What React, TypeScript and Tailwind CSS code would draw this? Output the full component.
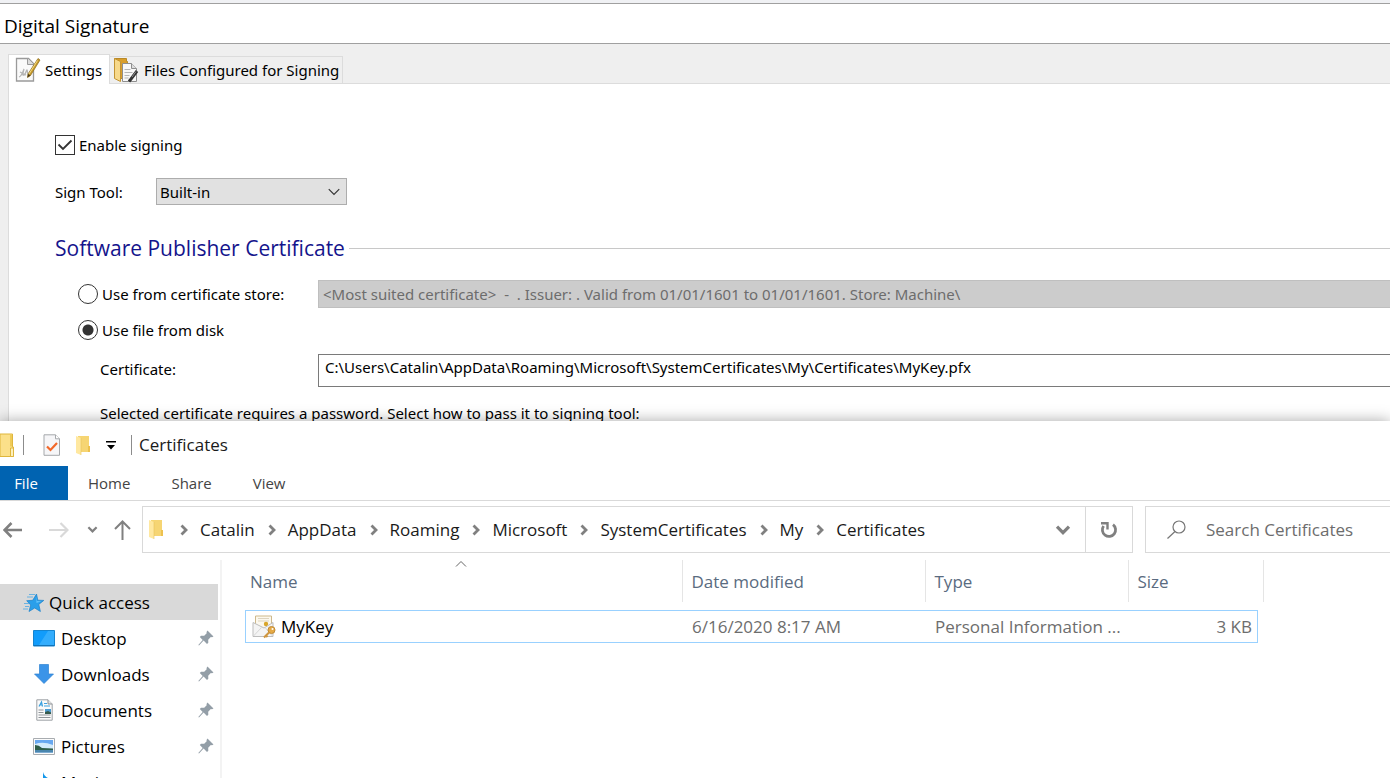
import React, { useState } from 'react';

const tahoma = "font-['Noto_Sans','Open_Sans',sans-serif]";
const segoe = "font-['Open_Sans','Noto_Sans',sans-serif]";

const SettingsIcon = () => (
  <svg width="26" height="26" viewBox="0 0 26 26" fill="none" aria-hidden="true">
    <path d="M1.500 1.500h12l5 5v17.500h-17z" fill="#fafafa" stroke="#9a9a9a" strokeWidth="1.300" />
    <path d="M12.500 1.500v6h6" fill="#dcdcdc" stroke="#9a9a9a" />
    <path d="M4 20c3-1 4-6 5-8-1 4-2 7 0 6s2-5 3-5-1 6 4 4M5 15l6 3" stroke="#b5b5b5" strokeWidth="1.300" />
    <path d="M23 1.500l2 1.500-9.500 15.500-3 2 .5-3.500z" fill="#c89b2c" stroke="#8a6a1d" strokeWidth=".7" />
    <path d="M22.500 3.500l-8.500 13.500" stroke="#f4dc83" />
    <path d="M13 17l-.5 3.500 3-2z" fill="#4b3a1b" />
  </svg>
);

const FilesIcon = () => (
  <svg width="26" height="26" viewBox="0 0 26 26" fill="none" aria-hidden="true">
    <path d="M1.500 1.500h12v3h1v17h-7l-6-1z" fill="#d99e2b" stroke="#b98928" />
    <path d="M1.500 1.500l6 3v20l-6-3z" fill="#f7d98b" stroke="#c39433" />
    <path d="M9.500 6.500h9l5 5v13h-14z" fill="#f8f8f8" stroke="#8e8e8e" />
    <path d="M18.500 6.500v5h5" fill="#ddd" stroke="#8e8e8e" />
    <path d="M11.500 12.500h6M11.500 15.500h8M11.500 18.500h5M11.500 21h4" stroke="#b5b5b5" />
    <path d="M24 14l-6 8-2 2.500" stroke="#333" strokeWidth="3" />
    <path d="M23 14.500l-4 5.500" stroke="#8b8b8b" />
  </svg>
);

const FolderIcon = () => (
  <svg width="14" height="21" viewBox="0 0 14 21" aria-hidden="true">
    <path d="M2 1h11v16H2z" fill="#f6d573" />
    <path d="M12 11h2v6h-2z" fill="#edc14f" />
    <path d="M0 1l5 2v17l-5-2z" fill="#ffe8a0" />
    <path d="M5 3v17" stroke="#e8c45c" strokeWidth=".6" />
  </svg>
);

const WindowFolderIcon = () => (
  <svg width="14" height="25" viewBox="0 0 14 25" aria-hidden="true">
    <path d="M0 1h12.500v13h1v9.500H0z" fill="#fbe08a" stroke="#dfb63d" />
    <path d="M10.500 23.500v-8.500h3v8.500z" fill="#fdf0bd" stroke="#dfb63d" />
    <path d="M11 1.500v12" stroke="#efcb58" strokeWidth="2" />
  </svg>
);

const PropertiesIcon = () => (
  <svg width="18" height="22" viewBox="0 0 18 22" fill="none" aria-hidden="true">
    <path d="M1 .8h11.500l4 4v16.500H1z" fill="#f6f6f8" stroke="#a5a8ab" />
    <path d="M12.500.8v4h4" fill="#fff" stroke="#a5a8ab" />
    <path d="M4 12.500l3.500 3.500 6.500-7" stroke="#f2682a" strokeWidth="2.200" />
  </svg>
);

const Chevron = ({ className }: { className: string }) => (
  <svg className={className} viewBox="0 0 12 12" fill="none" stroke="currentColor" aria-hidden="true">
    <path d="M1.500 3.500L6 8l4.500-4.500" />
  </svg>
);

const Crumb = () => (
  <svg width="8" height="12" viewBox="0 0 8 12" fill="none" stroke="#808080" strokeWidth="2.800" aria-hidden="true">
    <path d="M1.500 1.500L6 6l-4.500 4.500" />
  </svg>
);

const PinIcon = () => (
  <svg width="16" height="16" viewBox="0 0 16 16" fill="#939ea7" aria-hidden="true">
    <path d="M9.500.5l6 6-1.500.8-1.200-.2-2.600 2.700.1 3-1.300 1.200-3.400-3.400L1 15.500l-.7-.6 4.400-4.800L1.800 7 3 5.700l3.200.1 2.500-2.500L8.500 2z" />
  </svg>
);

const QuickAccessIcon = () => (
  <svg width="22" height="20" viewBox="0 0 22 20" aria-hidden="true">
    <path d="M13.500 1l1.300 6.200 6 .2-5 4 1.600 7.100-5.700-3.500L6 18.500l1.700-6.500-4-4.300 6-.4z" fill="#2a9fea" stroke="#1a7fc8" strokeWidth=".7" />
    <path d="M13.200 3l.8 5 4.500.3-5 1.700z" fill="#63c3fa" />
    <path d="M6 1.500h6M4 4h6M1 10.500h5M2 13.500h4M0 16h5" stroke="#5eaee2" strokeWidth=".9" />
  </svg>
);

const DesktopIcon = () => (
  <svg width="22" height="17" viewBox="0 0 22 17" aria-hidden="true">
    <path d="M.5.500h21v15.500H.5z" fill="#119cfb" stroke="#1584cf" />
    <path d="M15 1h6v14h-15z" fill="#33adfd" />
    <path d="M1 15.500h20" stroke="#1273b8" />
  </svg>
);

const DownloadsIcon = () => (
  <svg width="20" height="20" viewBox="0 0 20 20" aria-hidden="true">
    <path d="M5.500.5h9v9.500h5L10 19.500.5 10h5z" fill="#3b94e8" stroke="#2e82d1" strokeWidth=".7" />
  </svg>
);

const DocumentsIcon = () => (
  <svg width="17" height="22" viewBox="0 0 17 22" fill="none" aria-hidden="true">
    <path d="M.8.800h11.200l4.200 4.200v16.200H.8z" fill="#fafafa" stroke="#9da1a5" />
    <path d="M12 .8v4.200h4.200" fill="#e5e5e5" stroke="#8d9195" />
    <path d="M3 7.500l2.500-4.500 1 4.500M4 6h2.500M8 4.500h3M8 7h6" stroke="#3ca1df" strokeWidth="1.200" />
    <path d="M2.500 11h5M2.500 13.500h5M2.500 16h12M2.500 18.500h12" stroke="#8f9499" />
    <path d="M9 10h6v5H9z" fill="#4b9bd1" />
    <path d="M9 13l3-1 3 1.500v1.500H9z" fill="#365a4b" />
  </svg>
);

const PicturesIcon = () => (
  <svg width="22" height="17" viewBox="0 0 22 17" aria-hidden="true">
    <path d="M.5.500h21v16H.5z" fill="#fbfbfb" stroke="#a8acb0" />
    <path d="M2 2h18v12.500H2z" fill="#68a8f0" />
    <path d="M2 6q8-3 18 1v4H2z" fill="#d3ebfc" />
    <path d="M2 7q4 0 7 3l11 .5V12H2z" fill="#2f5e4a" />
    <path d="M2 12h18v2.500H2z" fill="#4a86ae" />
  </svg>
);

const MusicIcon = () => (
  <svg width="20" height="20" viewBox="0 0 20 20" aria-hidden="true">
    <path d="M9 0q1 4 5 6 3 2 2 6-2-4-5-4v7a4 3.500 0 1 1-2-3z" fill="#1296ea" />
  </svg>
);

const CertificateIcon = () => (
  <svg width="24" height="24" viewBox="0 0 24 24" fill="none" aria-hidden="true">
    <path d="M3.500 1h16v15h-16z" fill="#fcf8ee" stroke="#cdb98c" />
    <path d="M6 3.500h11M6 6h11" stroke="#ddd4bf" />
    <circle cx="14" cy="9" r="2.200" fill="#d9a62a" />
    <path d="M1 7.500l11 5.500 9-5.500v14H1z" fill="#f4f4f4" stroke="#bdbdbd" />
    <path d="M1.500 21l8-8.500M20.500 21l-7-8" stroke="#d5d5d5" />
    <circle cx="19.500" cy="15" r="3.500" fill="#e6aa45" stroke="#c08a35" />
    <circle cx="20.500" cy="14" r="1" fill="#fff" />
    <path d="M17 17.500l-5 5M14 20.500l1.500 1.500" stroke="#cf9640" strokeWidth="2" />
  </svg>
);

const crumbs = ['Catalin', 'AppData', 'Roaming', 'Microsoft', 'SystemCertificates', 'My', 'Certificates'];

const places = [
  { name: 'Desktop', icon: <DesktopIcon />, pinned: true },
  { name: 'Downloads', icon: <DownloadsIcon />, pinned: true },
  { name: 'Documents', icon: <DocumentsIcon />, pinned: true },
  { name: 'Pictures', icon: <PicturesIcon />, pinned: true },
  { name: 'Music', icon: <MusicIcon />, pinned: false },
];

interface SourceRadioProps {
  id: string;
  label: string;
  checked: boolean;
  onSelect: () => void;
}

const SourceRadio: React.FC<SourceRadioProps> = ({ id, label, checked, onSelect }) => (
  <div className="flex items-center gap-1 pl-[23px]">
    <input
      type="radio"
      name="source"
      id={id}
      checked={checked}
      onChange={onSelect}
      className="size-5 shrink-0 appearance-none rounded-full border border-[#333] bg-white checked:bg-[radial-gradient(circle,#333_5px,#fff_6px)]"
    />
    <label htmlFor={id}>{label}</label>
  </div>
);

const SignatureDialog = () => {
  const [enabled, setEnabled] = useState(true);
  const [source, setSource] = useState('disk');
  const [path, setPath] = useState('C:\\Users\\Catalin\\AppData\\Roaming\\Microsoft\\SystemCertificates\\My\\Certificates\\MyKey.pfx');

  return (
    <section className={`${tahoma} shrink-0 bg-[#efefef] text-[15px] leading-5 text-black`}>
      <header className="border-b border-[#a0a0a0] bg-[#f0f1f4] pt-[3px]">
        <h1 className={`${segoe} border-t border-[#a0a0a0] bg-white px-1 pt-2 pb-[3px] text-[19px] leading-7`}>Digital Signature</h1>
      </header>

      <div role="tablist" className="flex items-end pt-[10px] pl-2">
        <button role="tab" aria-selected="true" className="relative z-10 -mb-px flex h-[30px] items-center gap-1 border border-b-0 border-[#dcdcdc] bg-white pr-[7px] pl-[6px]">
          <SettingsIcon />
          Settings
        </button>
        <button role="tab" aria-selected="false" className="flex h-[27px] items-center gap-[5px] border border-b-0 border-l-0 border-[#dcdcdc] px-[3px]">
          <FilesIcon />
          Files Configured for Signing
        </button>
      </div>

      <div className="ml-2 border-t border-l border-[#dcdcdc] bg-white pt-[51px] pb-8 pl-[46px]">
        <div className="flex items-center gap-1">
          <span className="relative flex">
            <input
              type="checkbox"
              id="enable"
              checked={enabled}
              onChange={(e) => setEnabled(e.target.checked)}
              className="size-5 appearance-none border border-[#333] bg-white"
            />
            {enabled && (
              <svg className="pointer-events-none absolute inset-0" viewBox="0 0 20 20" fill="none" stroke="#333" strokeWidth="1.800">
                <path d="M3.500 9.500L8 14l8.500-8.500" />
              </svg>
            )}
          </span>
          <label htmlFor="enable">Enable signing</label>
        </div>

        <div className="mt-[23px] flex items-center">
          <label htmlFor="tool" className="w-[101px]">Sign Tool:</label>
          <span className="relative">
            <select id="tool" className="block h-[27px] w-[191px] appearance-none border border-[#adadad] bg-[#e1e1e1] pl-[3px]">
              <option>Built-in</option>
            </select>
            <Chevron className="pointer-events-none absolute top-[7px] right-[6px] size-[14px] text-[#333]" />
          </span>
        </div>

        <div className="mt-7 flex items-center gap-1">
          <h2 className={`${segoe} text-[21px] leading-[30px] text-[#14148c]`}>Software Publisher Certificate</h2>
          <span className="h-px flex-1 bg-[#c8c8c8]" />
        </div>

        <div className="mt-[17px] grid grid-cols-[263px_1fr] items-center">
          <SourceRadio id="store" label="Use from certificate store:" checked={source === 'store'} onSelect={() => setSource('store')} />
          <select aria-label="Certificate store" disabled className="h-7 w-full appearance-none border border-r-0 border-[#bfbfbf] bg-[#cccccc] pl-1 text-[#6d6d6d] opacity-100">
            <option>{'<Most suited certificate>\u00a0 -\u00a0 . Issuer: . Valid from 01/01/1601 to 01/01/1601. Store: Machine\\'}</option>
          </select>
        </div>
        <div className="mt-3">
          <SourceRadio id="disk" label="Use file from disk" checked={source === 'disk'} onSelect={() => setSource('disk')} />
        </div>
        <div className="mt-[14px] grid grid-cols-[263px_1fr] items-center">
          <label htmlFor="path" className="pb-1 pl-[45px]">Certificate:</label>
          <input
            id="path"
            value={path}
            onChange={(e) => setPath(e.target.value)}
            className="h-[33px] w-full border border-r-0 border-[#7a7a7a] bg-white pb-[7px] pl-[6px]"
          />
        </div>
        <p className="mt-4 pl-[45px]">Selected certificate requires a password. Select how to pass it to signing tool:</p>
      </div>
    </section>
  );
};

const TitleBar = () => (
  <header className="flex h-[45px] items-center pt-[3px] pr-4">
    <WindowFolderIcon />
    <span className="ml-[9px] h-5 w-px bg-[#8c8c8c]" />
    <button aria-label="Properties" className="ml-[19px]"><PropertiesIcon /></button>
    <button aria-label="New folder" className="ml-[15px]"><FolderIcon /></button>
    <button aria-label="Customize toolbar" className="ml-4">
      <svg width="10" height="9" viewBox="0 0 10 9" aria-hidden="true">
        <path d="M0 0h10v1.500H0zM1 4h8L5 8.500z" />
      </svg>
    </button>
    <span className="ml-[15px] h-5 w-px bg-[#8c8c8c]" />
    <h2 className="ml-[7px]">Certificates</h2>
  </header>
);

const AddressBar = () => (
  <div className="flex items-stretch pt-[5px]">
    <div className="flex w-[142px] shrink-0 items-center pl-[3px] text-[#808080]">
      <button aria-label="Back">
        <svg width="20" height="16" viewBox="0 0 20 16" fill="none" stroke="currentColor" strokeWidth="2.600" aria-hidden="true">
          <path d="M19 8H1.500M8.500 1l-7 7 7 7" />
        </svg>
      </button>
      <button aria-label="Forward" className="ml-[26px] text-[#d9d9d9]">
        <svg width="20" height="16" viewBox="0 0 20 16" fill="none" stroke="currentColor" strokeWidth="2.200" aria-hidden="true">
          <path d="M0 8h18.500M11.500 1l7 7-7 7" />
        </svg>
      </button>
      <button aria-label="Recent locations" className="ml-[18px]">
        <Chevron className="size-[11px] stroke-[2.400]" />
      </button>
      <button aria-label="Up" className="ml-4">
        <svg width="17" height="20" viewBox="0 0 17 20" fill="none" stroke="currentColor" strokeWidth="2" aria-hidden="true">
          <path d="M8.500 20V1.500M1 9l7.500-7.500L16 9" />
        </svg>
      </button>
    </div>
    <nav aria-label="Address" className="flex h-[47px] min-w-0 flex-1 items-center border border-[#d9d9d9] pl-[6px]">
      <span className="mr-1"><FolderIcon /></span>
      {crumbs.map((name) => (
        <React.Fragment key={name}>
          <span className="mr-3 ml-[13px]"><Crumb /></span>
          <a href="#">{name}</a>
        </React.Fragment>
      ))}
      <button aria-label="Previous locations" className="mr-[14px] ml-auto text-[#808080]">
        <Chevron className="size-4 stroke-[2.400]" />
      </button>
      <button aria-label="Refresh" className="flex w-[47px] items-center justify-center self-stretch border-l border-[#d9d9d9]">
        <svg width="18" height="18" viewBox="0 0 18 18" fill="none" stroke="#808080" strokeWidth="2.800" aria-hidden="true">
          <path d="M3.600 5A6.600 6.600 0 1 0 13 3.600" />
          <path d="M1 2.200h6.500v6.300" strokeWidth="2.400" />
        </svg>
      </button>
    </nav>
    <label className="ml-3 flex w-[245px] shrink-0 items-center gap-5 border border-r-0 border-[#d9d9d9] pl-[21px]">
      <svg width="19" height="19" viewBox="0 0 19 19" fill="none" stroke="#767676" strokeWidth="1.200" className="shrink-0" aria-hidden="true">
        <circle cx="12" cy="7" r="6" />
        <path d="M8 11.500L.5 18.500" />
      </svg>
      <input type="search" aria-label="Search Certificates" placeholder="Search Certificates" className="w-full min-w-0 outline-none placeholder:text-[#6d6d6d]" />
    </label>
  </div>
);

const FileTable = () => (
  <table className="w-[1018px] table-fixed border-collapse text-left text-[#6d6d6d]">
    <colgroup>
      <col className="w-[437px]" />
      <col className="w-[243px]" />
      <col className="w-[203px]" />
      <col className="w-[135px]" />
    </colgroup>
    <thead className="text-[#5a6b80]">
      <tr className="h-[42px]">
        <th className="relative border-r border-[#e5e5e5] pt-[3px] pb-px pl-[5px] font-normal">
          <svg className="absolute top-0 left-1/2 -ml-2" width="12" height="8" viewBox="0 0 12 8" fill="none" stroke="#666" aria-hidden="true">
            <path d="M1 6.500l5-5 5 5" />
          </svg>
          Name
        </th>
        <th className="border-r border-[#e5e5e5] pt-[3px] pb-px pl-[9px] font-normal">Date modified</th>
        <th className="border-r border-[#e5e5e5] pt-[3px] pb-px pl-[9px] font-normal">Type</th>
        <th className="border-r border-[#e5e5e5] pt-[3px] pb-px pl-[9px] font-normal">Size</th>
      </tr>
    </thead>
    <tbody>
      <tr>
        <td className="p-0 pt-2">
          <div className="flex h-[33px] items-center gap-[5px] border border-r-0 border-[#99d1ff] pt-px pl-[6px] text-black">
            <CertificateIcon />
            MyKey
          </div>
        </td>
        <td className="p-0 pt-2">
          <div className="flex h-[33px] items-center border-y border-[#99d1ff] pt-px pl-[10px]">6/16/2020 8:17 AM</div>
        </td>
        <td className="p-0 pt-2">
          <div className="flex h-[33px] items-center border-y border-[#99d1ff] pt-px pl-[10px]">Personal Information ...</div>
        </td>
        <td className="p-0 pt-2">
          <div className="mr-[5px] flex h-[33px] items-center justify-end border border-l-0 border-[#99d1ff] pt-px pr-[5px]">3 KB</div>
        </td>
      </tr>
    </tbody>
  </table>
);

const ExplorerWindow = () => (
  <section className={`${segoe} relative z-20 -mt-[34px] flex min-h-0 flex-1 flex-col bg-white text-[17px] leading-6 text-[#1a1a1a] shadow-[0_0_14px_rgba(0,0,0,0.35)]`}>
    <TitleBar />
    <div className="flex h-[35px] border-b border-[#d9d9d9] text-[15px] text-[#444]">
      <button className="w-[68px] bg-[#0063b1] pr-4 text-white">File</button>
      <button className="ml-5">Home</button>
      <button className="ml-[41px]">Share</button>
      <button className="ml-[41px]">View</button>
    </div>
    <AddressBar />
    <div className="flex min-h-0 flex-1 pt-[7px]">
      <nav aria-label="Places" className="w-[222px] shrink-0 border-r-2 border-[#f3f3f3] pt-6 text-black">
        <a href="#" className="mr-[2px] flex h-9 items-center gap-1 bg-[#d9d9d9] pt-[2px] pl-[23px]">
          <QuickAccessIcon />
          Quick access
        </a>
        {places.map((place) => (
          <a href="#" key={place.name} className="flex h-9 items-center pt-[2px] pr-[6px] pl-8">
            <span className="mr-[5px] flex w-6 justify-center pb-[2px]">{place.icon}</span>
            {place.name}
            {place.pinned && <span className="ml-auto pb-[2px]"><PinIcon /></span>}
          </a>
        ))}
      </nav>
      <div className="ml-[23px] min-w-0 flex-1">
        <FileTable />
      </div>
    </div>
  </section>
);

export default function App() {
  return (
    <main className="flex h-screen flex-col overflow-hidden bg-white">
      <SignatureDialog />
      <ExplorerWindow />
    </main>
  );
}
